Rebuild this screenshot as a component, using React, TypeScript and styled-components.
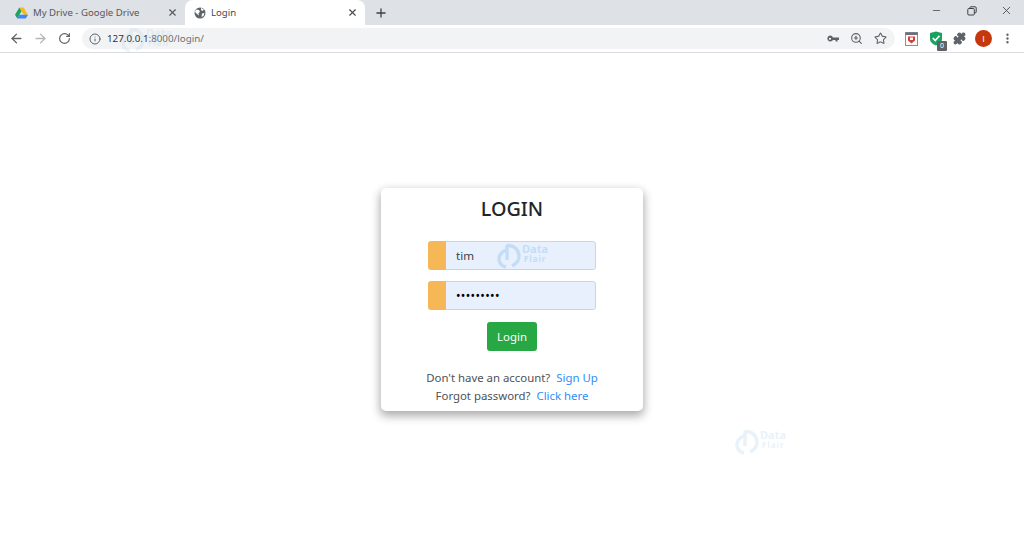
import React from 'react';
import styled, { createGlobalStyle } from 'styled-components';
import { ArrowLeft, ArrowRight, Info, Minus, MoreVertical, Plus, Puzzle, RotateCw, Star, X, ZoomIn } from 'lucide-react';

const GlobalStyle = createGlobalStyle`
  html, body {
    margin: 0;
    padding: 0;
    height: 100%;
    background: #fff;
    overflow: hidden;
  }
  #root {
    height: 100%;
  }
`;

const Window = styled.div`
  position: relative;
  display: flex;
  flex-direction: column;
  width: 1024px;
  height: 546px;
  font-family: 'Noto Sans', 'Open Sans', sans-serif;
  overflow: hidden;
`;

// --- Browser chrome ---

const TabStrip = styled.div`
  display: flex;
  align-items: flex-end;
  height: 25px;
  padding-left: 6px;
  background: #dee1e6;
  color: #3c4043;
`;

const Tab = styled.div<{ $active?: boolean }>`
  display: flex;
  align-items: center;
  gap: 5px;
  width: ${(p) => (p.$active ? 180 : 179)}px;
  height: 25px;
  padding: 0 7px 0 9px;
  box-sizing: border-box;
  border-radius: 8px 8px 0 0;
  background: ${(p) => (p.$active ? '#fff' : 'transparent')};
  font-size: 9.6px;
  color: ${(p) => (p.$active ? '#45484c' : '#54575b')};
`;

const TabTitle = styled.span`
  flex: 1;
  white-space: nowrap;
`;

const NewTab = styled.div`
  display: flex;
  align-items: center;
  justify-content: center;
  width: 32px;
  height: 25px;
  color: #3c4043;
`;

const WindowControls = styled.div`
  display: flex;
  align-self: flex-start;
  margin-left: auto;
`;

const WindowButton = styled.div`
  display: flex;
  align-items: center;
  justify-content: center;
  width: 35px;
  height: 21px;
  color: #3c4043;
`;

const Toolbar = styled.div`
  display: flex;
  align-items: center;
  height: 27px;
  padding: 0 6px 0 4px;
  background: #fff;
  border-bottom: 1px solid #dadce0;
`;

const NavButton = styled.div<{ $muted?: boolean }>`
  display: flex;
  align-items: center;
  justify-content: center;
  width: 24px;
  height: 24px;
  color: ${(p) => (p.$muted ? '#b4b7ba' : '#5f6368')};
`;

const AddressBar = styled.div`
  display: flex;
  align-items: center;
  width: 813px;
  height: 21px;
  margin-left: 6px;
  padding: 0 8px 0 7px;
  box-sizing: border-box;
  border-radius: 11px;
  background: #f1f3f4;
  font-size: 9.8px;
  color: #5f6368;
`;

const Url = styled.span`
  margin-left: 6px;
  color: #6d7074;
  b {
    font-weight: 400;
    color: #303236;
  }
`;

const AddressActions = styled.div`
  display: flex;
  align-items: center;
  gap: 11px;
  margin-left: auto;
`;

const Extensions = styled.div`
  display: flex;
  align-items: center;
  gap: 7px;
  margin-left: 8px;
`;

const ExtensionSlot = styled.div`
  position: relative;
  display: flex;
  align-items: center;
  justify-content: center;
  width: 17px;
  height: 24px;
  color: #5f6368;
`;

const CountBadge = styled.span`
  position: absolute;
  right: -3px;
  bottom: 0;
  width: 10px;
  height: 10px;
  border-radius: 1px;
  background: #5f6368;
  color: #fff;
  font-size: 7px;
  line-height: 10px;
  text-align: center;
`;

const Avatar = styled.div`
  display: flex;
  align-items: center;
  justify-content: center;
  width: 17px;
  height: 17px;
  border-radius: 50%;
  background: #c5370d;
  color: #fff;
  font-family: 'Liberation Sans', sans-serif;
  font-size: 9px;
`;

// --- Login page ---

const Page = styled.main`
  flex: 1;
  display: flex;
  align-items: center;
  justify-content: center;
  background: #fff;
`;

const Card = styled.section`
  display: flex;
  flex-direction: column;
  align-items: center;
  width: 262px;
  height: 223px;
  border-radius: 5px;
  background: #fff;
  box-shadow: 0 4px 10px 1px rgba(0, 0, 0, 0.33);
`;

const Title = styled.h3`
  margin: 6px 0 17px;
  height: 30px;
  font-size: 19.8px;
  line-height: 30px;
  font-weight: 500;
  color: #212529;
`;

const InputGroup = styled.div`
  display: flex;
  width: 168px;
  height: 29px;
  margin-bottom: 11px;
  border-radius: 3px;
  overflow: hidden;
`;

const Prepend = styled.div`
  width: 18px;
  background: #f6b756;
`;

const Field = styled.div<{ $secret?: boolean }>`
  flex: 1;
  padding-left: 10px;
  border: 1px solid #ced4da;
  border-left: none;
  border-radius: 0 3px 3px 0;
  background: #e8f0fe;
  color: ${(p) => (p.$secret ? '#000' : '#3d4145')};
  font-size: ${(p) => (p.$secret ? 12 : 11.6)}px;
  line-height: ${(p) => (p.$secret ? 27 : 28)}px;
  letter-spacing: ${(p) => (p.$secret ? '0.35px' : '0')};
`;

const LoginButton = styled.button`
  width: 50px;
  height: 29px;
  margin-top: 1px;
  padding: 0 0 1px;
  border: none;
  border-radius: 3px;
  background: #28a745;
  color: #fff;
  font-family: inherit;
  font-size: 11.4px;
`;

const Links = styled.div`
  margin-top: 18px;
  font-size: 11.4px;
  line-height: 18px;
  color: #4d5257;
  text-align: center;
  white-space: pre;
`;

const Link = styled.a`
  color: #2f8dfb;
  text-decoration: none;
`;

// --- Watermark ---

const Watermark = styled.div<{ $x: number; $y: number; $opacity: number }>`
  position: absolute;
  left: ${(p) => p.$x}px;
  top: ${(p) => p.$y}px;
  display: flex;
  align-items: center;
  gap: 1px;
  opacity: ${(p) => p.$opacity};
  color: #5aa9e6;
  pointer-events: none;
`;

const MarkWords = styled.div`
  display: flex;
  flex-direction: column;
  align-items: center;
  margin-top: -5px;
  font-family: 'Noto Sans', sans-serif;
  font-weight: 700;
  font-size: 11px;
  line-height: 10px;
  small {
    font-size: 8.5px;
    letter-spacing: 0.8px;
  }
`;

const DataFlair: React.FC<{ x: number; y: number; opacity: number }> = ({ x, y, opacity }) => (
  <Watermark $x={x} $y={y} $opacity={opacity}>
    <svg width="24" height="26" viewBox="0 0 24 26" fill="none" stroke="currentColor" strokeWidth="3.4">
      <path d="M10 2.5 C17 2 22 7 22 13 C22 18 19 21 15 23" />
      <path d="M9 7 C4 9 2 12 2 16 C2 20 5 23 9 24" />
      <path d="M10 2 V17" />
    </svg>
    <MarkWords>
      Data
      <small>Flair</small>
    </MarkWords>
  </Watermark>
);

const DriveIcon = () => (
  <svg width="13" height="12" viewBox="0 0 14 12">
    <path d="M4.7 0 H9.3 L14 8 H9.4 Z" fill="#f6bb1b" />
    <path d="M4.7 0 L7 4 L2.4 12 L0 8 Z" fill="#1ea362" />
    <path d="M4.7 8 H14 L11.7 12 H2.4 Z" fill="#4285f4" />
  </svg>
);

const GlobeIcon = () => (
  <svg width="12" height="12" viewBox="0 0 12 12">
    <circle cx="6" cy="6" r="5.5" fill="#5f6368" />
    <path d="M2 2.5 L5 3 L6 5 L4.5 6 L5 8.5 L3 7 L1 5 Z M7 1 L10 2.5 L8.5 4 L7 3 Z M8 6.5 L10.5 6 L9.5 9 L7.5 10 Z" fill="#fff" />
  </svg>
);

const RestoreIcon = () => (
  <svg width="10" height="10" viewBox="0 0 10 10" fill="none" stroke="currentColor" strokeWidth="1">
    <rect x="0.8" y="2.5" width="6.5" height="6.5" rx="1" />
    <path d="M3 2.5 V1.5 Q3 0.8 3.8 0.8 H8.2 Q9.2 0.8 9.2 1.8 V6 Q9.2 6.8 8.4 6.8 H7.3" />
  </svg>
);

const KeyIcon = () => (
  <svg width="12" height="8" viewBox="0 0 12 8" fill="#5f6368">
    <path d="M3 0.5 A3 3 0 0 1 6 2.5 H12 V5 H10.5 V6.5 H8.5 V5 H6 A3 3 0 1 1 3 0.5 Z M3 2.7 A1.1 1.1 0 1 0 3 4.9 A1.1 1.1 0 0 0 3 2.7 Z" fillRule="evenodd" />
  </svg>
);

const ShieldBox = () => (
  <svg width="13" height="14" viewBox="0 0 13 14">
    <rect x="0.5" y="0.5" width="12" height="13" fill="#fff" stroke="#8b8f94" />
    <rect x="0.5" y="0.5" width="12" height="2.5" fill="#6d7176" />
    <path d="M3 4.5 H10 V8.5 L6.5 11.5 L3 8.5 Z" fill="#d93a3a" />
    <path d="M5 5.5 H8 V8 H5 Z" fill="#fff" />
  </svg>
);

const GreenShield = () => (
  <svg width="14" height="15" viewBox="0 0 14 15">
    <path d="M7 0.5 L13 2 V8 C13 11 10 13.5 7 14.5 C4 13.5 1 11 1 8 V2 Z" fill="#1aa260" />
    <path d="M3.8 7 L6.2 9.5 L10.5 4.8" fill="none" stroke="#fff" strokeWidth="1.7" />
  </svg>
);

const App: React.FC = () => {
  return (
    <Window>
      <GlobalStyle />
      <TabStrip>
        <Tab>
          <DriveIcon />
          <TabTitle>My Drive - Google Drive</TabTitle>
          <X size={11} strokeWidth={2.4} />
        </Tab>
        <Tab $active>
          <GlobeIcon />
          <TabTitle>Login</TabTitle>
          <X size={11} strokeWidth={2.4} />
        </Tab>
        <NewTab>
          <Plus size={14} strokeWidth={2.2} />
        </NewTab>
        <WindowControls>
          <WindowButton><Minus size={11} strokeWidth={1.6} /></WindowButton>
          <WindowButton><RestoreIcon /></WindowButton>
          <WindowButton><X size={13} strokeWidth={1.5} /></WindowButton>
        </WindowControls>
      </TabStrip>

      <Toolbar>
        <NavButton><ArrowLeft size={15} strokeWidth={2.2} /></NavButton>
        <NavButton $muted><ArrowRight size={15} strokeWidth={2.2} /></NavButton>
        <NavButton><RotateCw size={13} strokeWidth={2.2} /></NavButton>
        <AddressBar>
          <Info size={12} />
          <Url><b>127.0.0.1</b>:8000/login/</Url>
          <AddressActions>
            <KeyIcon />
            <ZoomIn size={13} />
            <Star size={13} />
          </AddressActions>
        </AddressBar>
        <Extensions>
          <ExtensionSlot><ShieldBox /></ExtensionSlot>
          <ExtensionSlot>
            <GreenShield />
            <CountBadge>0</CountBadge>
          </ExtensionSlot>
          <ExtensionSlot><Puzzle size={13} fill="#5f6368" /></ExtensionSlot>
          <ExtensionSlot><Avatar>I</Avatar></ExtensionSlot>
          <ExtensionSlot><MoreVertical size={13} strokeWidth={2.4} /></ExtensionSlot>
        </Extensions>
      </Toolbar>

      <Page>
        <Card>
          <Title>LOGIN</Title>
          <InputGroup>
            <Prepend />
            <Field>tim</Field>
          </InputGroup>
          <InputGroup>
            <Prepend />
            <Field $secret>•••••••••</Field>
          </InputGroup>
          <LoginButton>Login</LoginButton>
          <Links>
            <div>Don't have an account?  <Link href="#">Sign Up</Link></div>
            <div>Forgot password?  <Link href="#">Click here</Link></div>
          </Links>
        </Card>
      </Page>

      <DataFlair x={121} y={27} opacity={0.1} />
      <DataFlair x={497} y={243} opacity={0.25} />
      <DataFlair x={735} y={429} opacity={0.14} />
    </Window>
  );
};

export default App;
